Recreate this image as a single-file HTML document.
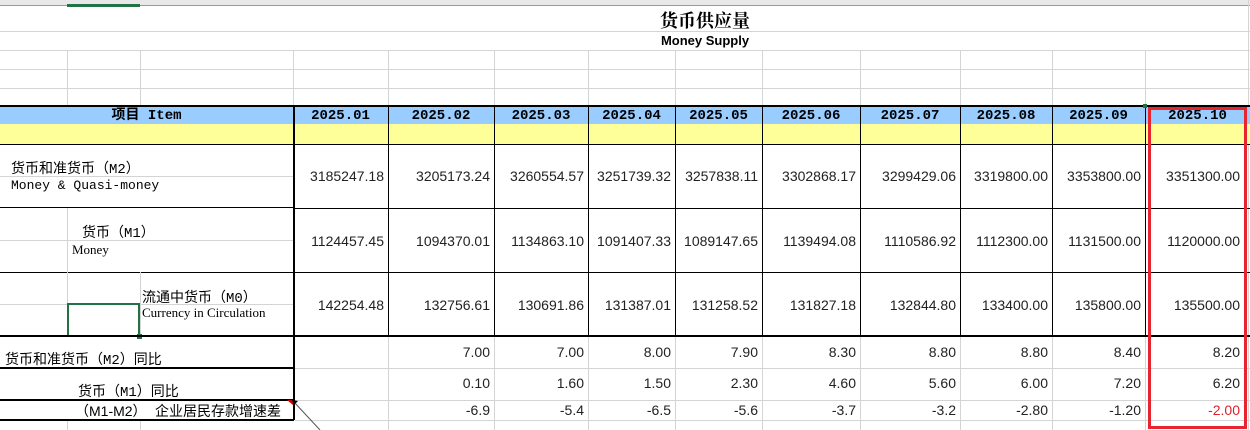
<!DOCTYPE html>
<html><head><meta charset="utf-8"><style>
body{margin:0;width:1250px;height:430px;overflow:hidden;background:#fff;position:relative;font-family:"Liberation Sans","Noto Sans CJK SC",sans-serif}
div{position:absolute;box-sizing:border-box}
.h{height:1px;background:#d4d4d4}
.v{width:1px;background:#d4d4d4}
.bh{height:2px;background:#000}
.bv{width:1px;background:#000}
.d{font:bold 14px "Liberation Mono","Noto Sans CJK SC",monospace;text-align:center;top:108px;height:17px;line-height:17px;color:#000}
.n{font-size:14px;color:#222;text-align:right;height:16px;line-height:16px}
.cn{font:14px "Liberation Mono","Noto Sans CJK SC",monospace;color:#000;white-space:nowrap}
.se{font:13px "Liberation Serif",serif;color:#000;white-space:nowrap}
</style></head><body>
<div style="left:0;top:0;width:1250px;height:6px;background:#e8e8e8;border-bottom:1px solid #9a9a9a"></div>
<div style="left:67px;top:4px;width:73px;height:3px;background:#217346"></div>
<div class="h" style="left:0;top:31px;width:1250px"></div>
<div class="h" style="left:0;top:50px;width:1250px"></div>
<div class="h" style="left:0;top:69px;width:1250px"></div>
<div class="h" style="left:0;top:88px;width:1250px"></div>
<div class="v" style="left:67px;top:50px;height:55px"></div>
<div class="v" style="left:140px;top:50px;height:55px"></div>
<div class="v" style="left:293px;top:50px;height:55px"></div>
<div class="v" style="left:388px;top:50px;height:55px"></div>
<div class="v" style="left:494px;top:50px;height:55px"></div>
<div class="v" style="left:588px;top:50px;height:55px"></div>
<div class="v" style="left:675px;top:50px;height:55px"></div>
<div class="v" style="left:762px;top:50px;height:55px"></div>
<div class="v" style="left:860px;top:50px;height:55px"></div>
<div class="v" style="left:960px;top:50px;height:55px"></div>
<div class="v" style="left:1052px;top:50px;height:55px"></div>
<div class="v" style="left:1145px;top:50px;height:55px"></div>
<div class="v" style="left:1248px;top:0;height:430px"></div>
<div style="left:550px;top:8px;width:310px;text-align:center;font:bold 18px 'Noto Serif CJK SC',serif;line-height:24px">货币供应量</div>
<div style="left:550px;top:33px;width:310px;text-align:center;font:bold 13px 'Liberation Sans',sans-serif;line-height:16px">Money Supply</div>
<div style="left:0;top:105px;width:1250px;height:2px;background:#000"></div>
<div style="left:0;top:107px;width:1250px;height:17px;background:#99ccff"></div>
<div style="left:0;top:124px;width:1250px;height:21px;background:#ffff99"></div>
<div class="bh" style="left:0;top:144px;width:1250px;height:1px"></div>
<div class="d" style="left:0;width:293px">项目 Item</div>
<div class="d" style="left:293px;width:95px">2025.01</div>
<div class="d" style="left:388px;width:106px">2025.02</div>
<div class="d" style="left:494px;width:94px">2025.03</div>
<div class="d" style="left:588px;width:87px">2025.04</div>
<div class="d" style="left:675px;width:87px">2025.05</div>
<div class="d" style="left:762px;width:98px">2025.06</div>
<div class="d" style="left:860px;width:100px">2025.07</div>
<div class="d" style="left:960px;width:92px">2025.08</div>
<div class="d" style="left:1052px;width:93px">2025.09</div>
<div class="d" style="left:1145px;width:105px">2025.10</div>
<div class="bv" style="left:293px;top:105px;height:315px;width:2px"></div>
<div class="bv" style="left:388px;top:105px;height:231px"></div>
<div class="bv" style="left:494px;top:105px;height:231px"></div>
<div class="bv" style="left:588px;top:105px;height:231px"></div>
<div class="bv" style="left:675px;top:105px;height:231px"></div>
<div class="bv" style="left:762px;top:105px;height:231px"></div>
<div class="bv" style="left:860px;top:105px;height:231px"></div>
<div class="bv" style="left:960px;top:105px;height:231px"></div>
<div class="bv" style="left:1052px;top:105px;height:231px"></div>
<div class="bv" style="left:1145px;top:105px;height:231px"></div>
<div class="bh" style="left:293px;top:208px;width:957px;height:1px"></div>
<div class="bh" style="left:293px;top:272px;width:957px;height:1px"></div>
<div class="bh" style="left:0;top:207px;width:293px;height:1px"></div>
<div class="bh" style="left:0;top:272px;width:293px;height:1px"></div>
<div class="h" style="left:0;top:176px;width:293px"></div>
<div class="h" style="left:0;top:240px;width:293px"></div>
<div class="h" style="left:0;top:304px;width:293px"></div>
<div class="v" style="left:67px;top:208px;height:128px"></div>
<div class="v" style="left:140px;top:272px;height:64px"></div>
<div style="left:67px;top:303px;width:73px;height:34px;border:2px solid #217346"></div>
<div style="left:137px;top:334px;width:5px;height:5px;background:#217346"></div>
<div class="cn" style="left:11px;top:158px">货币和准货币（M2）</div>
<div class="cn" style="left:11px;top:178px;font-size:13px">Money &amp; Quasi-money</div>
<div class="cn" style="left:82px;top:222px">货币（M1）</div>
<div class="se" style="left:72px;top:242px">Money</div>
<div class="cn" style="left:142px;top:287px">流通中货币（M0）</div>
<div class="se" style="left:142px;top:305px">Currency in Circulation</div>
<div class="n" style="left:293px;width:91px;top:168px">3185247.18</div>
<div class="n" style="left:388px;width:102px;top:168px">3205173.24</div>
<div class="n" style="left:494px;width:90px;top:168px">3260554.57</div>
<div class="n" style="left:588px;width:83px;top:168px">3251739.32</div>
<div class="n" style="left:675px;width:83px;top:168px">3257838.11</div>
<div class="n" style="left:762px;width:94px;top:168px">3302868.17</div>
<div class="n" style="left:860px;width:96px;top:168px">3299429.06</div>
<div class="n" style="left:960px;width:88px;top:168px">3319800.00</div>
<div class="n" style="left:1052px;width:89px;top:168px">3353800.00</div>
<div class="n" style="left:1145px;width:95px;top:168px">3351300.00</div>
<div class="n" style="left:293px;width:91px;top:233px">1124457.45</div>
<div class="n" style="left:388px;width:102px;top:233px">1094370.01</div>
<div class="n" style="left:494px;width:90px;top:233px">1134863.10</div>
<div class="n" style="left:588px;width:83px;top:233px">1091407.33</div>
<div class="n" style="left:675px;width:83px;top:233px">1089147.65</div>
<div class="n" style="left:762px;width:94px;top:233px">1139494.08</div>
<div class="n" style="left:860px;width:96px;top:233px">1110586.92</div>
<div class="n" style="left:960px;width:88px;top:233px">1112300.00</div>
<div class="n" style="left:1052px;width:89px;top:233px">1131500.00</div>
<div class="n" style="left:1145px;width:95px;top:233px">1120000.00</div>
<div class="n" style="left:293px;width:91px;top:297px">142254.48</div>
<div class="n" style="left:388px;width:102px;top:297px">132756.61</div>
<div class="n" style="left:494px;width:90px;top:297px">130691.86</div>
<div class="n" style="left:588px;width:83px;top:297px">131387.01</div>
<div class="n" style="left:675px;width:83px;top:297px">131258.52</div>
<div class="n" style="left:762px;width:94px;top:297px">131827.18</div>
<div class="n" style="left:860px;width:96px;top:297px">132844.80</div>
<div class="n" style="left:960px;width:88px;top:297px">133400.00</div>
<div class="n" style="left:1052px;width:89px;top:297px">135800.00</div>
<div class="n" style="left:1145px;width:95px;top:297px">135500.00</div>
<div class="bh" style="left:0;top:335px;width:1250px"></div>
<div class="h" style="left:295px;top:368px;width:955px"></div>
<div class="h" style="left:295px;top:400px;width:955px"></div>
<div class="h" style="left:295px;top:420px;width:955px"></div>
<div class="bh" style="left:0;top:367px;width:294px"></div>
<div class="bh" style="left:0;top:399px;width:294px"></div>
<div class="bh" style="left:0;top:419px;width:294px"></div>
<div class="v" style="left:388px;top:337px;height:93px"></div>
<div class="v" style="left:494px;top:337px;height:93px"></div>
<div class="v" style="left:588px;top:337px;height:93px"></div>
<div class="v" style="left:675px;top:337px;height:93px"></div>
<div class="v" style="left:762px;top:337px;height:93px"></div>
<div class="v" style="left:860px;top:337px;height:93px"></div>
<div class="v" style="left:960px;top:337px;height:93px"></div>
<div class="v" style="left:1052px;top:337px;height:93px"></div>
<div class="v" style="left:1145px;top:337px;height:93px"></div>
<div class="v" style="left:67px;top:421px;height:9px"></div>
<div class="v" style="left:140px;top:421px;height:9px"></div>
<div class="cn" style="left:5px;top:349px">货币和准货币（M2）同比</div>
<div class="cn" style="left:78px;top:381px">货币（M1）同比</div>
<div class="cn" style="left:75px;top:401px"><span style="font-family:'Liberation Sans','Noto Sans CJK SC',sans-serif">（M1-M2）</span> 企业居民存款增速差</div>
<svg style="position:absolute;left:0;top:0" width="1250" height="430"><polygon points="287,400 293,400 293,405" fill="#c00"/><line x1="294" y1="402" x2="320" y2="430" stroke="#555" stroke-width="1"/><polygon points="292,400 298,401 294,405" fill="#000"/></svg>
<div class="n" style="left:388px;width:102px;top:344px">7.00</div>
<div class="n" style="left:494px;width:90px;top:344px">7.00</div>
<div class="n" style="left:588px;width:83px;top:344px">8.00</div>
<div class="n" style="left:675px;width:83px;top:344px">7.90</div>
<div class="n" style="left:762px;width:94px;top:344px">8.30</div>
<div class="n" style="left:860px;width:96px;top:344px">8.80</div>
<div class="n" style="left:960px;width:88px;top:344px">8.80</div>
<div class="n" style="left:1052px;width:89px;top:344px">8.40</div>
<div class="n" style="left:1145px;width:95px;top:344px">8.20</div>
<div class="n" style="left:388px;width:102px;top:375px">0.10</div>
<div class="n" style="left:494px;width:90px;top:375px">1.60</div>
<div class="n" style="left:588px;width:83px;top:375px">1.50</div>
<div class="n" style="left:675px;width:83px;top:375px">2.30</div>
<div class="n" style="left:762px;width:94px;top:375px">4.60</div>
<div class="n" style="left:860px;width:96px;top:375px">5.60</div>
<div class="n" style="left:960px;width:88px;top:375px">6.00</div>
<div class="n" style="left:1052px;width:89px;top:375px">7.20</div>
<div class="n" style="left:1145px;width:95px;top:375px">6.20</div>
<div class="n" style="left:388px;width:102px;top:402px">-6.9</div>
<div class="n" style="left:494px;width:90px;top:402px">-5.4</div>
<div class="n" style="left:588px;width:83px;top:402px">-6.5</div>
<div class="n" style="left:675px;width:83px;top:402px">-5.6</div>
<div class="n" style="left:762px;width:94px;top:402px">-3.7</div>
<div class="n" style="left:860px;width:96px;top:402px">-3.2</div>
<div class="n" style="left:960px;width:88px;top:402px">-2.80</div>
<div class="n" style="left:1052px;width:89px;top:402px">-1.20</div>
<div class="n" style="left:1145px;width:95px;top:402px;color:#e0202a">-2.00</div>
<div style="left:1148px;top:107px;width:99px;height:322px;border:3px solid #e8242e"></div>
<div style="left:1143px;top:104px;width:4px;height:4px;background:#217346"></div>
</body></html>
